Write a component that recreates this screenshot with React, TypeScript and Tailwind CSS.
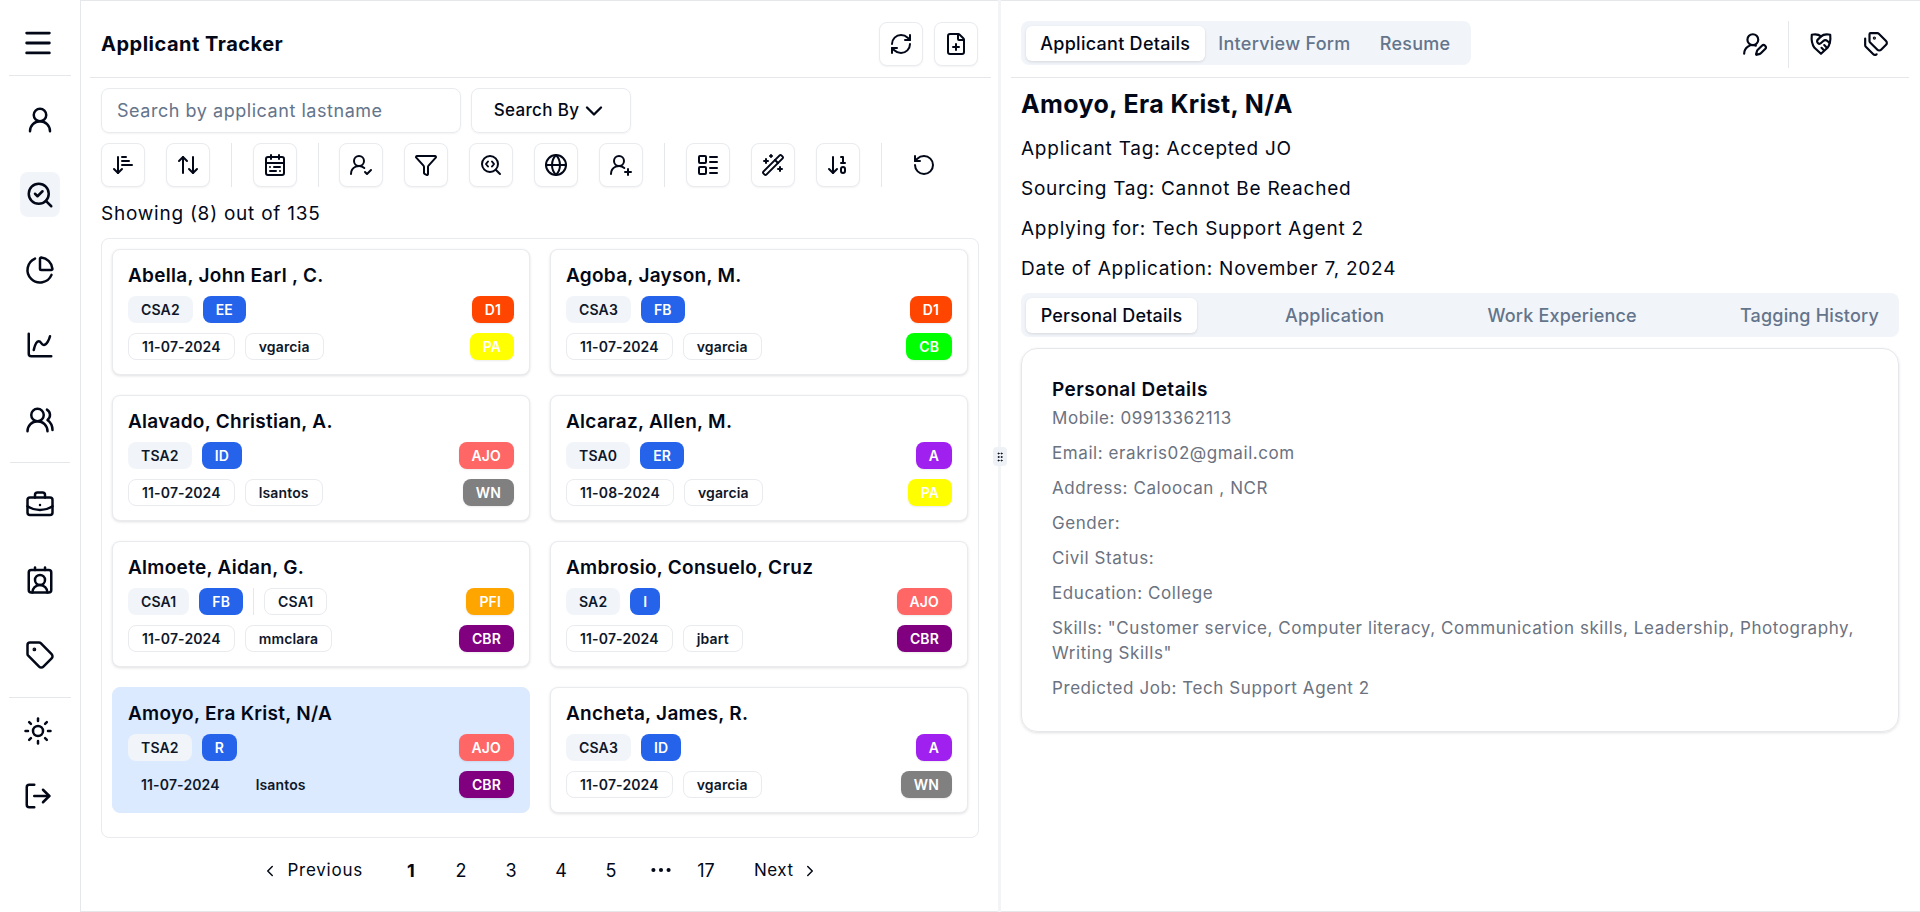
import React from "react";
import {
  Menu, UserRound, SearchCheck, ChartPie, ChartSpline, UsersRound, BriefcaseBusiness, ContactRound, Tag, Sun, LogOut,
  RefreshCw, FilePlus, ChevronDown, ChevronLeft, ChevronRight, ArrowDownNarrowWide, ArrowUpDown, CalendarRange,
  UserRoundCheck, Funnel, SearchCode, Globe, UserRoundPlus, LayoutList, WandSparkles, ArrowDown10, RotateCcw,
  UserRoundPen, Tags, Ellipsis, GripVertical,
} from "lucide-react";

const IconBtn = ({ icon: I }: { icon: any }) => (
  <button className="w-[44px] h-[44px] shrink-0 flex items-center justify-center rounded-lg border border-[#e9ebef] bg-white shadow-[0_1px_2px_rgba(0,0,0,0.05)] text-[#020817]">
    <I size={24} strokeWidth={2} />
  </button>
);
const Sep = () => <div className="w-px h-[44px] bg-[#e5e7eb] mr-[-0.4px] shrink-0" />;

const ShieldShake = () => (
  <svg width="26" height="26" viewBox="0 0 24 24" fill="none" stroke="currentColor" strokeWidth="2" strokeLinecap="round" strokeLinejoin="round">
    <path d="M12 5C10 3.2 8 2.8 5 3.2L3.5 3.5C3 8 3.5 12 6 15.5L12 21L18 15.5C20.5 12 21 8 20.5 3.5L19 3.2C16 2.8 14 3.2 12 5Z" />
    <path d="M12 5 9.04 7.96a2.17 2.17 0 0 0 0 3.08c.82.82 2.13.85 3 .07l2.07-1.9a2.82 2.82 0 0 1 3.79 0l2.1 1.9" />
    <path d="m17 15-2-2" />
    <path d="m14.5 17.5-2-2" />
  </svg>
);

const SideItem = ({ icon: I, h = "h-[75px]", active = false, shift = false }: { icon: any; h?: string; active?: boolean; shift?: boolean }) => (
  <div className={`${h} w-full flex items-center justify-center ${shift ? "pr-[4px]" : ""}`}>
    <div className={`w-[40px] h-[45px] flex items-center justify-center rounded-lg ${active ? "bg-[#f1f5f9]" : ""}`}>
      <I size={30} strokeWidth={2} className="text-[#020817]" />
    </div>
  </div>
);

type C = {
  name: string; pos: string; src: string; extra?: string; date: string; user: string;
  b1: string; c1: string; b2: string; c2: string; sel?: boolean;
};
const cards: C[] = [
  { name: "Abella, John Earl , C.", pos: "CSA2", src: "EE", date: "11-07-2024", user: "vgarcia", b1: "D1", c1: "bg-[#ff4500]", b2: "PA", c2: "bg-[#ffff00]" },
  { name: "Agoba, Jayson, M.", pos: "CSA3", src: "FB", date: "11-07-2024", user: "vgarcia", b1: "D1", c1: "bg-[#ff4500]", b2: "CB", c2: "bg-[#00ff00]" },
  { name: "Alavado, Christian, A.", pos: "TSA2", src: "ID", date: "11-07-2024", user: "lsantos", b1: "AJO", c1: "bg-[#ff6666]", b2: "WN", c2: "bg-[#808080]" },
  { name: "Alcaraz, Allen, M.", pos: "TSA0", src: "ER", date: "11-08-2024", user: "vgarcia", b1: "A", c1: "bg-[#a020f0]", b2: "PA", c2: "bg-[#ffff00]" },
  { name: "Almoete, Aidan, G.", pos: "CSA1", src: "FB", extra: "CSA1", date: "11-07-2024", user: "mmclara", b1: "PFI", c1: "bg-[#ffa500]", b2: "CBR", c2: "bg-[#800080]" },
  { name: "Ambrosio, Consuelo, Cruz", pos: "SA2", src: "I", date: "11-07-2024", user: "jbart", b1: "AJO", c1: "bg-[#ff6666]", b2: "CBR", c2: "bg-[#800080]" },
  { name: "Amoyo, Era Krist, N/A", pos: "TSA2", src: "R", date: "11-07-2024", user: "lsantos", b1: "AJO", c1: "bg-[#ff6666]", b2: "CBR", c2: "bg-[#800080]", sel: true },
  { name: "Ancheta, James, R.", pos: "CSA3", src: "ID", date: "11-07-2024", user: "vgarcia", b1: "A", c1: "bg-[#a020f0]", b2: "WN", c2: "bg-[#808080]" },
];

const chip = "h-[27px] px-[13px] flex items-center rounded-lg text-[14px] font-semibold tracking-[0.01em] leading-none whitespace-nowrap";

const Badge = ({ label, color }: { label: string; color: string }) => (
  <span className={`${chip} ${color} text-white shadow-[0_1px_2px_rgba(0,0,0,0.08)]`}>{label}</span>
);

const Card = ({ c }: { c: C }) => (
  <div className={`h-[126px] rounded-lg px-[15px] pt-[12px] border ${c.sel ? "bg-[#dbeafe] border-[#dbeafe]" : "bg-white border-[#e9ebef] shadow-[0_1px_3px_rgba(0,0,0,0.12)]"}`}>
    <div className="h-[28px] flex items-center text-[19px] font-semibold text-[#020817] tracking-[0.015em] whitespace-nowrap">{c.name}</div>
    <div className="mt-[6px] flex justify-between">
      <div className="flex flex-col gap-[10px]">
        <div className="flex items-center gap-[10px]">
          <span className={`${chip} bg-[#f1f5f9] text-[#0f172a]`}>{c.pos}</span>
          <span className={`${chip} bg-[#2563eb] text-white`}>{c.src}</span>
          {c.extra && (
            <>
              <div className="w-px h-[27px] bg-[#e5e7eb]" />
              <span className={`${chip} border border-[#e9ebef] text-[#0f172a]`}>{c.extra}</span>
            </>
          )}
        </div>
        <div className="flex items-center gap-[10px]">
          <span className={`${chip} text-[#0f172a] ${c.sel ? "" : "border border-[#e9ebef]"}`}>{c.date}</span>
          <span className={`${chip} text-[#0f172a] ${c.sel ? "" : "border border-[#e9ebef]"}`}>{c.user}</span>
        </div>
      </div>
      <div className="flex flex-col items-end gap-[10px]">
        <Badge label={c.b1} color={c.c1} />
        <Badge label={c.b2} color={c.c2} />
      </div>
    </div>
  </div>
);

const pageCls = "w-[40px] h-[40px] flex items-center justify-center text-[18px] text-[#020817]";

const details = [
  "Mobile: 09913362113",
  "Email: erakris02@gmail.com",
  "Address: Caloocan , NCR",
  "Gender:",
  "Civil Status:",
  "Education: College",
  "Skills: \"Customer service, Computer literacy, Communication skills, Leadership, Photography, Writing Skills\"",
  "Predicted Job: Tech Support Agent 2",
];

export default function App() {
  return (
    <div className="relative flex w-full h-screen bg-white text-[#020817] overflow-hidden [font-family:Inter,sans-serif]">
      {/* Sidebar */}
      <aside className="w-[81px] shrink-0 border-r border-[#e5e7eb] flex flex-col items-center">
        <div className="w-[62px] h-[76px] flex items-center justify-center pr-[4px] pt-[10px] border-b border-[#e5e7eb]">
          <Menu size={34} strokeWidth={2} className="text-[#020817]" />
        </div>
        <div className="h-[6px] shrink-0" />
        <SideItem icon={UserRound} />
        <SideItem icon={SearchCheck} active />
        <SideItem icon={ChartPie} />
        <SideItem icon={ChartSpline} />
        <SideItem icon={UsersRound} />
        <div className="w-[60px] h-px mt-[5px] mb-[4px] bg-[#e5e7eb]" />
        <SideItem icon={BriefcaseBusiness} />
        <SideItem icon={ContactRound} />
        <SideItem icon={Tag} />
        <div className="w-[62px] h-px mt-[5px] bg-[#e5e7eb]" />
        <SideItem icon={Sun} h="h-[65px]" shift />
        <SideItem icon={LogOut} h="h-[65px]" shift />
      </aside>

      {/* Left panel */}
      <main className="w-[917px] shrink-0 h-full border-y border-[#e5e7eb] pl-[20px] pr-[19px] flex flex-col">
        <div className="-ml-[11px] -mr-[12px] pl-[11px] pr-[13px] pt-[10px] h-[77px] shrink-0 border-b border-[#e5e7eb] flex items-center justify-between">
          <h1 className="text-[20px] font-bold tracking-[0.025em] text-[#020817]">Applicant Tracker</h1>
          <div className="flex gap-[11px]">
            <IconBtn icon={RefreshCw} />
            <IconBtn icon={FilePlus} />
          </div>
        </div>
        <div className="mt-[10px] flex gap-[10px]">
          <div className="w-[360px] h-[45px] pb-[1px] rounded-lg border border-[#e9ebef] shadow-[0_1px_2px_rgba(0,0,0,0.05)] flex items-center px-[15px] text-[18px] tracking-[0.03em] text-[#64748b] whitespace-nowrap">
            Search by applicant lastname
          </div>
          <button className="w-[160px] h-[45px] rounded-lg border border-[#e9ebef] shadow-[0_1px_2px_rgba(0,0,0,0.05)] flex items-center justify-center gap-[1px] text-[17px] font-medium tracking-[0.02em]">
            Search By <ChevronDown size={28} />
          </button>
        </div>
        <div className="mt-[10px] flex items-center gap-[21px]">
          <IconBtn icon={ArrowDownNarrowWide} />
          <IconBtn icon={ArrowUpDown} />
          <Sep />
          <IconBtn icon={CalendarRange} />
          <Sep />
          <IconBtn icon={UserRoundCheck} />
          <IconBtn icon={Funnel} />
          <IconBtn icon={SearchCode} />
          <IconBtn icon={Globe} />
          <IconBtn icon={UserRoundPlus} />
          <Sep />
          <IconBtn icon={LayoutList} />
          <IconBtn icon={WandSparkles} />
          <IconBtn icon={ArrowDown10} />
          <Sep />
          <div className="w-[44px] h-[44px] flex items-center justify-center"><RotateCcw size={24} /></div>
        </div>
        <div className="h-[51px] pt-[3px] shrink-0 flex items-center text-[19px] tracking-[0.04em]">Showing (8) out of 135</div>
        <div className="h-[600px] shrink-0 rounded-lg border border-[#e9ebef] p-[10px]">
          <div className="grid grid-cols-2 gap-[20px]">
            {cards.map((c) => <Card key={c.name} c={c} />)}
          </div>
        </div>
        <nav className="mt-[12px] h-[40px] flex items-center justify-center">
          <div className="flex items-center gap-[10px]">
            <div className="flex items-center gap-[8px] pr-[18px] pt-[1px] text-[17px] tracking-[0.045em]"><ChevronLeft size={18} />Previous</div>
            <div className={`${pageCls} font-bold`}>1</div>
            <div className={pageCls}>2</div>
            <div className={pageCls}>3</div>
            <div className={pageCls}>4</div>
            <div className={pageCls}>5</div>
            <div className={pageCls}><Ellipsis size={26} strokeWidth={1.8} /></div>
            <div className={`${pageCls} -ml-[5px]`}>17</div>
            <div className="flex items-center gap-[7px] pl-[18px] pt-[1px] text-[17px] tracking-[0.03em]">Next<ChevronRight size={18} /></div>
          </div>
        </nav>
      </main>

      {/* Divider */}
      <div className="relative w-[3px] shrink-0 bg-[#f3f4f6]">
        <div className="absolute left-[-5px] top-[447px] w-[14px] h-[19px] rounded-sm bg-[#eef2f7] flex items-center justify-center">
          <GripVertical size={12} className="text-[#020817]" />
        </div>
      </div>

      {/* Right panel */}
      <section className="flex-1 h-full border-y border-[#e5e7eb] pl-[20px] pr-[21px] flex flex-col">
        <div className="-mx-[10px] px-[10px] pt-[8px] h-[77px] shrink-0 border-b border-[#e5e7eb] flex items-center justify-between">
          <div className="h-[44px] w-[450px] rounded-lg bg-[#f1f5f9] flex items-center px-[5px] text-[18px] font-medium tracking-[0.015em] text-[#64748b] whitespace-nowrap">
            <div className="h-[35px] w-[179px] rounded-md bg-white shadow-[0_1px_3px_rgba(0,0,0,0.12)] flex items-center justify-center text-[#020817]">Applicant Details</div>
            <div className="w-[160px] flex justify-center">Interview Form</div>
            <div className="w-[102px] flex justify-center">Resume</div>
          </div>
          <div className="flex items-center pr-[10px] mt-[2px]">
            <UserRoundPen size={26} />
            <div className="w-px h-[47px] bg-[#e5e7eb] ml-[20px] mr-[19px]" />
            <ShieldShake />
            <Tags size={26} className="ml-[29px]" />
          </div>
        </div>
        <h2 className="mt-[10px] h-[34px] flex items-center text-[25px] font-bold tracking-[0.015em] text-[#020817]">Amoyo, Era Krist, N/A</h2>
        <div className="mt-[7px] flex flex-col text-[19px] tracking-[0.04em]">
          <div className="h-[40px] flex items-center">Applicant Tag: Accepted JO</div>
          <div className="h-[40px] flex items-center">Sourcing Tag: Cannot Be Reached</div>
          <div className="h-[40px] flex items-center">Applying for: Tech Support Agent 2</div>
          <div className="h-[40px] flex items-center">Date of Application: November 7, 2024</div>
        </div>
        <div className="mt-[4px] h-[44px] rounded-lg bg-[#f1f5f9] flex items-center justify-between px-[5px] text-[18px] font-medium tracking-[0.01em] text-[#64748b] whitespace-nowrap">
          <div className="h-[35px] w-[171px] rounded-md bg-white shadow-[0_1px_3px_rgba(0,0,0,0.12)] flex items-center justify-center text-[#020817]">Personal Details</div>
          <div className="px-[15px]">Application</div>
          <div className="px-[15px]">Work Experience</div>
          <div className="px-[15px]">Tagging History</div>
        </div>
        <div className="mt-[11px] h-[384px] rounded-2xl border border-[#e5e7eb] shadow-[0_1px_3px_rgba(0,0,0,0.12)] pl-[30px] pr-[30px] pt-[28px]">
          <h3 className="h-[27px] flex items-center text-[19px] font-semibold tracking-[0.025em] text-[#020817]">Personal Details</h3>
          <div className="mt-[2px] flex flex-col gap-[10px] text-[17px] leading-[25px] tracking-[0.034em] text-[#6b7280]">
            {details.map((d) => <p key={d}>{d}</p>)}
          </div>
        </div>
      </section>
    </div>
  );
}
